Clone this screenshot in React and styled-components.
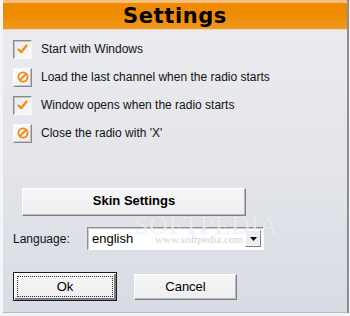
import React from 'react';
import styled, { createGlobalStyle } from 'styled-components';

const GlobalStyle = createGlobalStyle`
  html, body {
    margin: 0;
    padding: 0;
    background: #d6d9e0;
  }
  body {
    font-family: 'Liberation Sans', Arial, sans-serif;
  }
`;

const OPTIONS = [
  { id: 'start', label: 'Start with Windows', checked: true },
  { id: 'last', label: 'Load the last channel when the radio starts', checked: false },
  { id: 'open', label: 'Window opens when the radio starts', checked: true },
  { id: 'close', label: "Close the radio with 'X'", checked: false },
];

const CheckIcon = () => (
  <svg width="11" height="10" viewBox="0 0 11 10">
    <path d="M1.5 5.5 L4.2 8.2 L9.5 1.5" fill="none" stroke="#f28a12" strokeWidth="2.2" strokeLinecap="round" strokeLinejoin="round" />
  </svg>
);

const NoIcon = () => (
  <svg width="12" height="12" viewBox="0 0 12 12">
    <circle cx="6" cy="6" r="4.6" fill="none" stroke="#f28a12" strokeWidth="1.8" />
    <path d="M3 9 L9 3" stroke="#f28a12" strokeWidth="1.8" />
  </svg>
);

const App = () => {
  return (
    <>
      <GlobalStyle />
      <Frame>
        <Header>
          <Title>Settings</Title>
        </Header>

        <OptionList>
          {OPTIONS.map((opt) => (
            <OptionRow key={opt.id}>
              <Box $checked={opt.checked}>{opt.checked ? <CheckIcon /> : <NoIcon />}</Box>
              <Label>{opt.label}</Label>
            </OptionRow>
          ))}
        </OptionList>

        <SkinButton>Skin Settings</SkinButton>

        <LanguageRow>
          <Label>Language:</Label>
          <Select>
            <SelectValue>english</SelectValue>
            <ArrowButton>
              <svg width="7" height="4" viewBox="0 0 7 4">
                <path d="M0 0 H7 L3.5 4 Z" fill="#000" />
              </svg>
            </ArrowButton>
          </Select>
        </LanguageRow>

        <ActionRow>
          <DefaultButton>
            <FocusRect>Ok</FocusRect>
          </DefaultButton>
          <PlainButton>Cancel</PlainButton>
        </ActionRow>

        {/* watermark over the dialog */}
        <Watermark>
          SOFTPEDIA<sup>™</sup>
        </Watermark>
        <WatermarkUrl>www.softpedia.com</WatermarkUrl>
      </Frame>
    </>
  );
};

export default App;

const Frame = styled.div`
  position: relative;
  width: 350px;
  height: 316px;
  box-sizing: border-box;
  border-left: 3px solid #f4f5f7;
  border-right: 1px solid #f4f5f7;
  border-bottom: 3px solid #f2f3f6;
  box-shadow: inset -2px 0 0 #8c8d92, inset 0 -1px 0 #b9bcc3;
  background: linear-gradient(180deg, #ecedf1 0%, #e3e5ea 55%, #d7dbe3 100%);
  display: flex;
  flex-direction: column;
  overflow: hidden;
`;

const Header = styled.div`
  height: 26px;
  margin-right: 2px;
  border-top: 3px solid #f5bf7e;
  border-bottom: 1px solid #f3d7b4;
  background: linear-gradient(180deg, #ef8c02 0%, #ee8a00 45%, #f09a22 100%);
  display: flex;
  align-items: center;
  justify-content: center;
`;

const Title = styled.div`
  font-family: 'DejaVu Sans', Verdana, sans-serif;
  font-weight: bold;
  font-size: 21px;
  letter-spacing: 0.6px;
  color: #000;
  line-height: 26px;
`;

const OptionList = styled.div`
  display: flex;
  flex-direction: column;
  padding: 5px 0 0 10px;
`;

const OptionRow = styled.div`
  height: 28px;
  display: flex;
  align-items: center;
  gap: 9px;
`;

const Box = styled.div`
  width: 19px;
  height: 19px;
  box-sizing: border-box;
  display: flex;
  align-items: center;
  justify-content: center;
  background: ${({ $checked }) =>
    $checked ? 'linear-gradient(135deg, #e9e9ec, #fafafa)' : 'linear-gradient(135deg, #fdfdfd, #ececee)'};
  border: 1px solid;
  border-color: ${({ $checked }) =>
    $checked ? '#8a8a8e #f8f8f8 #f8f8f8 #8a8a8e' : '#fbfbfb #8a8a8e #8a8a8e #fbfbfb'};
  box-shadow: ${({ $checked }) =>
    $checked ? 'inset 1px 1px 0 #c4c4c8' : 'inset -1px -1px 0 #c4c4c8'};
`;

const Label = styled.span`
  font-family: 'Liberation Sans', Arial, sans-serif;
  font-size: 12px;
  color: #111;
  white-space: nowrap;
`;

const Button = styled.button`
  font-family: 'Liberation Sans', Arial, sans-serif;
  font-size: 12px;
  color: #000;
  background: linear-gradient(180deg, #f6f6f7 0%, #eeeef0 100%);
  border: 1px solid;
  border-color: #ffffff #7e7f84 #7e7f84 #ffffff;
  box-shadow: inset -1px -1px 0 #b8b9be;
  padding: 0;
  cursor: pointer;
`;

const SkinButton = styled(Button)`
  width: 224px;
  height: 28px;
  margin: 41px 0 0 19px;
  font-weight: bold;
  font-size: 13px;
  padding-bottom: 3px;
`;

const LanguageRow = styled.div`
  display: flex;
  align-items: center;
  gap: 0;
  margin: 11px 0 0 10px;

  ${Label} {
    width: 74px;
  }
`;

const Select = styled.div`
  width: 177px;
  height: 23px;
  box-sizing: border-box;
  background: #fff;
  border: 1px solid;
  border-color: #8e8f94 #fdfdfd #fdfdfd #8e8f94;
  box-shadow: inset 1px 1px 0 #c9cacf;
  display: flex;
  align-items: center;
  justify-content: space-between;
  padding: 2px 2px 2px 4px;
`;

const SelectValue = styled.span`
  font-size: 13px;
  color: #000;
`;

const ArrowButton = styled.div`
  width: 16px;
  height: 17px;
  box-sizing: border-box;
  background: #eeeef0;
  border: 1px solid;
  border-color: #ffffff #7e7f84 #7e7f84 #ffffff;
  display: flex;
  align-items: center;
  justify-content: center;
`;

const ActionRow = styled.div`
  display: flex;
  align-items: center;
  gap: 17px;
  margin: 22px 0 0 10px;
`;

const DefaultButton = styled(Button)`
  width: 104px;
  height: 29px;
  border: 1px solid #1a1a1a;
  box-shadow: inset 1px 1px 0 #ffffff, inset -2px -2px 0 #7e7f84;
  padding: 3px;
`;

const FocusRect = styled.span`
  display: flex;
  align-items: center;
  justify-content: center;
  height: 100%;
  border: 1px dotted #333;
  box-sizing: border-box;
  font-size: 13px;
`;

const PlainButton = styled(Button)`
  width: 103px;
  height: 26px;
  font-size: 13px;
`;

const Watermark = styled.div`
  position: absolute;
  left: 131px;
  top: 209px;
  font-family: 'Liberation Serif', 'Times New Roman', serif;
  font-size: 26px;
  line-height: 18px;
  letter-spacing: 0.5px;
  color: rgba(255, 255, 255, 0.6);
  text-shadow: 0 0 1px rgba(160, 165, 175, 0.35);
  pointer-events: none;

  sup {
    font-size: 7px;
    vertical-align: 14px;
  }
`;

const WatermarkUrl = styled.div`
  position: absolute;
  left: 152px;
  top: 233px;
  font-family: 'Liberation Serif', 'Times New Roman', serif;
  font-size: 11px;
  line-height: 12px;
  color: rgba(190, 194, 202, 0.75);
  pointer-events: none;
`;
